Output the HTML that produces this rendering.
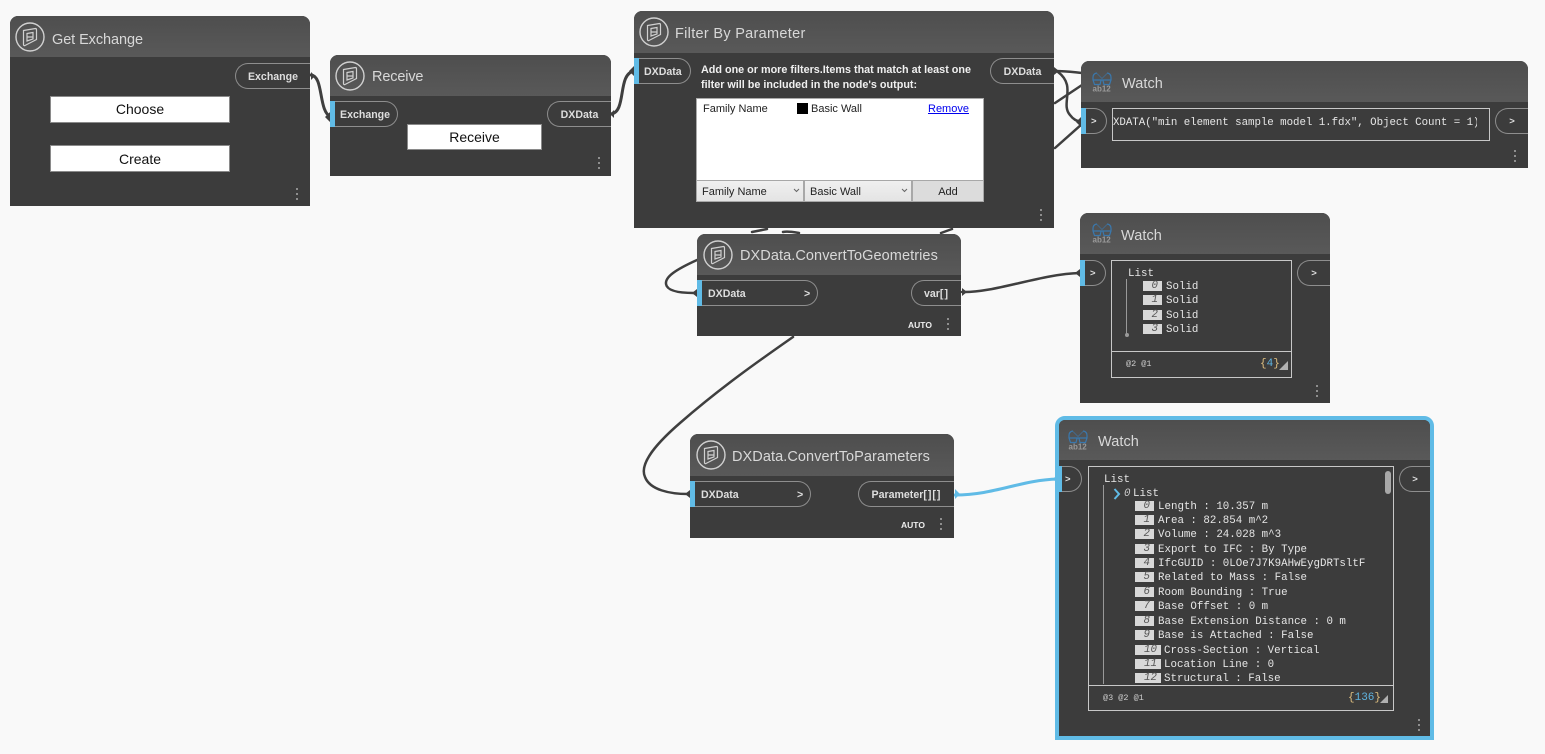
<!DOCTYPE html>
<html><head><meta charset="utf-8"><title>Graph</title>
<style>
html,body{margin:0;padding:0;background:#f9f9f9}
#c{position:relative;width:1545px;height:754px;overflow:hidden;background:#f9f9f9;font-family:"Liberation Sans",sans-serif}
#c div,#c span.a,#c a{position:absolute;box-sizing:border-box}
.n{background:#3c3c3c;border-radius:8px 8px 0 0}
.h{left:0;top:0;right:0;background:linear-gradient(#4e4e4e,#595959);border-radius:8px 8px 0 0}
.t{color:#d8d8d8;font-size:14.5px;line-height:20px;white-space:nowrap;letter-spacing:.08px}
.p{height:26px;border:1px solid #8e8e8e;color:#dedede;font-size:10.6px;font-weight:bold;line-height:26px;white-space:nowrap}
.s{font-size:9.500px}
.i{border-left:0;border-radius:0 13px 13px 0}
.o{border-right:0;border-radius:13px 0 0 13px;text-align:center}
.b{background:#60bbe6;width:5px;height:26px}
.btn{background:#fff;border:1px solid #8a8a8a;color:#111;font-size:14px;text-align:center;white-space:nowrap}
.d{width:2px;height:2px;background:#a8a8a8;border-radius:1px}
.lbl{color:#f0f0f0;font-size:10.8px;white-space:nowrap;line-height:16px}
.blk{color:#222;font-size:11px;white-space:nowrap;line-height:16px}
.m{font-family:"Liberation Mono",monospace;font-size:10.8px;line-height:15px;color:#e6e6e6;white-space:pre}
.ix{background:#d8d8d8;color:#555;font:italic 10.8px/11px "Liberation Mono",monospace;text-align:right;padding-right:4px;height:10px;width:19px}
.bx{border:1px solid #c8c8c8}
.au{color:#eee;font-size:8.500px;font-weight:bold;line-height:12px;white-space:nowrap}
svg{position:absolute;overflow:visible}
.ls{letter-spacing:1px}
</style></head><body><div id="c">

<svg style="left:0;top:0" width="1545" height="754" fill="none" stroke="#3f3f3f" stroke-width="2.5" stroke-linecap="round">
<path d="M311 75C324 76 318 112 331 117" stroke-width="3"/>
<path d="M611 114C627 112 617 74 634 71" stroke-width="3"/>
<path d="M1055 71C1065 71 1072 72 1082 73"/>
<path d="M1058 72C1077 86 1060 104 1070 115C1073 119 1076 121 1082 122"/>
<path d="M1055 103L1082 85"/>
<path d="M1055 148L1082 124"/>
<path d="M752 232L767 229"/>
<path d="M783 232C788 231 793 232 799 233"/>
<path d="M941 233L952 229"/>
<path d="M697 260C675 270 665 277 666 284C667 291 680 293 694 293"/>
<path d="M793 337C760 360 720 388 680 423C650 449 640 466 645 477C650 490 670 494 688 494"/>
<path d="M962 292C995 293 1040 274 1080 273" stroke-width="2.5"/>
<path d="M955 495C995 495 1020 480 1058 479" stroke="#60bbe6" stroke-width="3"/>
<path d="M311 72l4 4l-4 4zM1054 67l5 4l-5 4zM614 110l-4 4l4 4z" fill="#3f3f3f" stroke="none"/>
<path d="M962 288l5 4l-5 4zM1080 269l-5 4l5 4zM697 289l-5 4l5 4zM690 490l-5 4l5 4zM330 112v10l-5-5zM634 66v10l-5-5zM1081 117v10l-5-5z" fill="#3f3f3f" stroke="none"/>
<path d="M955 489l5 5l-5 5zM1058 474v10l-5-5z" fill="#60bbe6" stroke="none"/>
</svg>

<!-- Get Exchange -->
<div class="n" style="left:10px;top:16px;width:300px;height:190px">
<div class="h" style="height:41px"></div>
<svg style="left:5px;top:6px" width="30" height="30" fill="none" stroke="#d0d0d0"><circle cx="15" cy="15" r="14" stroke-width="1.4"/><path d="M8.500 8.500L20.500 6.500Q21.500 6.500 21.500 8V17.500L10 23.500Q8.500 24 8.500 22.500ZM12 11.500L18 10.500V17L12 19ZM12 15H18" stroke-width="1.2"/></svg>
<div class="t" style="left:42px;top:14px;letter-spacing:-.08px">Get Exchange</div>
</div>
<div class="p o" style="left:235px;top:63px;width:75px">Exchange</div>
<div class="btn" style="left:50px;top:96px;width:180px;height:27px;line-height:25px">Choose</div>
<div class="btn" style="left:50px;top:145px;width:180px;height:27px;line-height:26px">Create</div>
<div class="d" style="left:296px;top:188px"></div><div class="d" style="left:296px;top:193px"></div><div class="d" style="left:296px;top:198px"></div>

<!-- Receive -->
<div class="n" style="left:330px;top:55px;width:281px;height:121px">
<div class="h" style="height:41px"></div>
<svg style="left:5px;top:6px" width="30" height="30" fill="none" stroke="#d0d0d0"><circle cx="15" cy="15" r="14" stroke-width="1.4"/><path d="M8.500 8.500L20.500 6.500Q21.500 6.500 21.500 8V17.500L10 23.500Q8.500 24 8.500 22.500ZM12 11.500L18 10.500V17L12 19ZM12 15H18" stroke-width="1.2"/></svg>
<div class="t" style="left:42px;top:12px;letter-spacing:-.15px">Receive</div>
</div>
<div class="p i" style="left:330px;top:101px;width:68px;padding-left:10px">Exchange</div><div class="b" style="left:330px;top:101px"></div>
<div class="p o" style="left:547px;top:101px;width:64px">DXData</div>
<div class="btn" style="left:407px;top:124px;width:135px;height:26px;line-height:24px">Receive</div>
<div class="d" style="left:598px;top:157px"></div><div class="d" style="left:598px;top:162px"></div><div class="d" style="left:598px;top:167px"></div>

<!-- Filter -->
<div class="n" style="left:634px;top:11px;width:420px;height:217px">
<div class="h" style="height:42px"></div>
<svg style="left:5px;top:6px" width="30" height="30" fill="none" stroke="#d0d0d0"><circle cx="15" cy="15" r="14" stroke-width="1.4"/><path d="M8.500 8.500L20.500 6.500Q21.500 6.500 21.500 8V17.500L10 23.500Q8.500 24 8.500 22.500ZM12 11.500L18 10.500V17L12 19ZM12 15H18" stroke-width="1.2"/></svg>
<div class="t" style="left:41px;top:13px;letter-spacing:.3px">Filter By Parameter</div>
</div>
<div class="p i" style="left:634px;top:58px;width:57px;padding-left:10px">DXData</div><div class="b" style="left:634px;top:58px"></div>
<div class="p o" style="left:990px;top:58px;width:64px">DXData</div>
<div class="lbl" style="left:701px;top:62px;font-weight:bold">Add one or more filters.Items that match at least one</div>
<div class="lbl" style="left:701px;top:77px;font-weight:bold">filter will be included in the node's output:</div>
<div style="left:696px;top:98px;width:288px;height:104px;background:#fff;border:1px solid #aaa"></div>
<div class="blk" style="left:703px;top:101px">Family Name</div>
<div style="left:797px;top:103px;width:11px;height:11px;background:#000"></div>
<div class="blk" style="left:811px;top:101px">Basic Wall</div>
<a class="blk" style="position:absolute;left:928px;top:101px;color:#0000ee;text-decoration:underline">Remove</a>
<div style="left:696px;top:180px;width:288px;height:22px;background:#a8a8a8"></div>
<div class="blk" style="left:697px;top:181px;width:106px;height:20px;background:linear-gradient(#f0f0f0,#e4e4e4);padding:3px 0 0 5px;font-weight:normal">Family Name</div>
<div class="blk" style="left:805px;top:181px;width:106px;height:20px;background:linear-gradient(#f0f0f0,#e4e4e4);padding:3px 0 0 5px">Basic Wall</div>
<div class="blk" style="left:913px;top:181px;width:70px;height:20px;background:#dcdcdc;text-align:center;padding-top:3px">Add</div>
<svg style="left:793px;top:188px" width="120" height="6" fill="none" stroke="#666"><path d="M1 1l2.500 2.500L6 1M109 1l2.500 2.500L114 1"/></svg>
<div class="d" style="left:1040px;top:209px"></div><div class="d" style="left:1040px;top:214px"></div><div class="d" style="left:1040px;top:219px"></div>

<!-- Watch 1 -->
<div class="n" style="left:1081px;top:61px;width:447px;height:107px">
<div class="h" style="height:41px"></div>
<svg style="left:11px;top:9px" width="20" height="23" fill="none" stroke="#3a78ad" stroke-width="1.200"><path d="M1 10V7.500Q1 3.500 5 3M19 10V7.500Q19 3.500 15 3M.5 10H19.500M1 10L2.500 14.500H8L9 10.500M19 10L17.500 14.500H12L11 10.500"/><path d="M5 3.500L10 8.500L15 3.500" stroke-opacity=".6" stroke-width="1"/><text x=".5" y="21.500" fill="#9a9a9a" stroke="none" font-size="8" font-family="Liberation Sans" font-weight="bold">ab12</text></svg>
<div class="t" style="left:41px;top:13px">Watch</div>
</div>
<div class="p i s" style="left:1081px;top:108px;width:26px;padding-left:10px">&gt;</div><div class="b" style="left:1081px;top:108px"></div>
<div class="bx" style="left:1112px;top:108px;width:378px;height:33px"></div>
<div class="m" style="left:1113px;top:116px;width:364px;overflow:hidden;letter-spacing:-.05px">XDATA("min element sample model 1.fdx", Object Count = 1)</div>
<div class="p o s" style="left:1495px;top:108px;width:33px">&gt;</div>
<div class="d" style="left:1514px;top:150px"></div><div class="d" style="left:1514px;top:155px"></div><div class="d" style="left:1514px;top:160px"></div>

<!-- Convert To Geometries -->
<div class="n" style="left:697px;top:234px;width:264px;height:102px">
<div class="h" style="height:41px"></div>
<svg style="left:6px;top:6px" width="30" height="30" fill="none" stroke="#d0d0d0"><circle cx="15" cy="15" r="14" stroke-width="1.4"/><path d="M8.500 8.500L20.500 6.500Q21.500 6.500 21.500 8V17.500L10 23.500Q8.500 24 8.500 22.500ZM12 11.500L18 10.500V17L12 19ZM12 15H18" stroke-width="1.2"/></svg>
<div class="t" style="left:43px;top:12px">DXData.ConvertToGeometries</div>
</div>
<div class="p i" style="left:697px;top:280px;width:121px;padding-left:11px">DXData<span class="a" style="left:107px;top:0">&gt;</span></div><div class="b" style="left:697px;top:280px"></div>
<div class="p o" style="left:911px;top:280px;width:50px">var<span class="ls">[]</span></div>
<div class="au" style="left:908px;top:319px">AUTO</div>
<div class="d" style="left:947px;top:318px"></div><div class="d" style="left:947px;top:323px"></div><div class="d" style="left:947px;top:328px"></div>

<!-- Watch 2 -->
<div class="n" style="left:1080px;top:213px;width:250px;height:190px">
<div class="h" style="height:41px"></div>
<svg style="left:12px;top:8px" width="20" height="23" fill="none" stroke="#3a78ad" stroke-width="1.200"><path d="M1 10V7.500Q1 3.500 5 3M19 10V7.500Q19 3.500 15 3M.5 10H19.500M1 10L2.500 14.500H8L9 10.500M19 10L17.500 14.500H12L11 10.500"/><path d="M5 3.500L10 8.500L15 3.500" stroke-opacity=".6" stroke-width="1"/><text x=".5" y="21.500" fill="#9a9a9a" stroke="none" font-size="8" font-family="Liberation Sans" font-weight="bold">ab12</text></svg>
<div class="t" style="left:41px;top:13px">Watch</div>
</div>
<div class="p i s" style="left:1080px;top:260px;width:26px;padding-left:10px">&gt;</div><div class="b" style="left:1080px;top:260px"></div>
<div class="p o s" style="left:1297px;top:260px;width:33px">&gt;</div>
<div class="bx" style="left:1111px;top:260px;width:181px;height:118px"></div>
<div style="left:1112px;top:351px;width:179px;height:1px;background:#c8c8c8"></div>
<div class="m" style="left:1128px;top:267px">List</div>
<div style="left:1126px;top:279px;width:1px;height:55px;background:#999"></div>
<div style="left:1125px;top:333px;width:4px;height:4px;border-radius:2px;background:#999"></div>
<div class="ix" style="left:1143px;top:281px">0</div><div class="m" style="left:1166px;top:280px">Solid</div>
<div class="ix" style="left:1143px;top:295px">1</div><div class="m" style="left:1166px;top:294px">Solid</div>
<div class="ix" style="left:1143px;top:310px">2</div><div class="m" style="left:1166px;top:309px">Solid</div>
<div class="ix" style="left:1143px;top:324px">3</div><div class="m" style="left:1166px;top:323px">Solid</div>
<div class="m" style="left:1126px;top:357px;font-size:8.500px;color:#ccc">@2 @1</div>
<div class="m" style="left:1260px;top:357px;font-size:11px;color:#e0c080">{<span style="color:#5fb4e0">4</span>}</div>
<svg style="left:1279px;top:360px" width="10" height="10"><path d="M0 10L9 1V10Z" fill="#b0b0b0"/></svg>
<div class="d" style="left:1316px;top:385px"></div><div class="d" style="left:1316px;top:390px"></div><div class="d" style="left:1316px;top:395px"></div>

<!-- Convert To Parameters -->
<div class="n" style="left:690px;top:434px;width:264px;height:104px">
<div class="h" style="height:42px"></div>
<svg style="left:6px;top:6px" width="30" height="30" fill="none" stroke="#d0d0d0"><circle cx="15" cy="15" r="14" stroke-width="1.4"/><path d="M8.500 8.500L20.500 6.500Q21.500 6.500 21.500 8V17.500L10 23.500Q8.500 24 8.500 22.500ZM12 11.500L18 10.500V17L12 19ZM12 15H18" stroke-width="1.2"/></svg>
<div class="t" style="left:42px;top:13px">DXData.ConvertToParameters</div>
</div>
<div class="p i" style="left:690px;top:481px;width:121px;padding-left:11px">DXData<span class="a" style="left:107px;top:0">&gt;</span></div><div class="b" style="left:690px;top:481px"></div>
<div class="p o" style="left:858px;top:481px;width:96px">Parameter<span class="ls">[][]</span></div>
<div class="au" style="left:901px;top:519px">AUTO</div>
<div class="d" style="left:940px;top:518px"></div><div class="d" style="left:940px;top:523px"></div><div class="d" style="left:940px;top:528px"></div>

<!-- Watch 3 (selected) -->
<div style="left:1055px;top:416px;width:379px;height:324px;border:4px solid #60bbe6;border-radius:10px 10px 0 0;background:#3c3c3c"></div>
<div class="h" style="left:1059px;top:420px;width:371px;right:auto;height:40px;border-radius:6px 6px 0 0"></div>
<svg style="left:1068px;top:428px" width="20" height="23" fill="none" stroke="#3a78ad" stroke-width="1.200"><path d="M1 10V7.500Q1 3.500 5 3M19 10V7.500Q19 3.500 15 3M.5 10H19.500M1 10L2.500 14.500H8L9 10.500M19 10L17.500 14.500H12L11 10.500"/><path d="M5 3.500L10 8.500L15 3.500" stroke-opacity=".6" stroke-width="1"/><text x=".5" y="21.500" fill="#9a9a9a" stroke="none" font-size="8" font-family="Liberation Sans" font-weight="bold">ab12</text></svg>
<div class="t" style="left:1098px;top:432px">Watch</div>
<div class="p i s" style="left:1059px;top:466px;width:23px;padding-left:6px">&gt;</div><div class="b" style="left:1057px;top:466px"></div>
<div class="p o s" style="left:1399px;top:466px;width:31px">&gt;</div>
<div class="bx" style="left:1088px;top:466px;width:306px;height:245px"></div>
<div style="left:1089px;top:685px;width:304px;height:1px;background:#c8c8c8"></div>
<div style="left:1385px;top:471px;width:6px;height:23px;border-radius:3px;background:#a8a8a8"></div>
<div class="m" style="left:1104px;top:473px">List</div>
<div style="left:1103px;top:485px;width:1px;height:199px;background:#999"></div>
<svg style="left:1113px;top:488px" width="8" height="12" fill="none" stroke="#60bbe6" stroke-width="2"><path d="M1.500 1L6 6L1.500 11"/></svg>
<div class="m" style="left:1124px;top:487px;font-style:italic;color:#ccc">0</div>
<div class="m" style="left:1133px;top:487px">List</div>
<div style="left:1089px;top:500px;width:295px;height:185px;overflow:hidden;background:transparent">
<div class="ix" style="left:46px;top:1px">0</div><div class="m" style="left:69px;top:0">Length : 10.357 m</div>
<div class="ix" style="left:46px;top:15px">1</div><div class="m" style="left:69px;top:14px">Area : 82.854 m^2</div>
<div class="ix" style="left:46px;top:29px">2</div><div class="m" style="left:69px;top:28px">Volume : 24.028 m^3</div>
<div class="ix" style="left:46px;top:44px">3</div><div class="m" style="left:69px;top:43px">Export to IFC : By Type</div>
<div class="ix" style="left:46px;top:58px">4</div><div class="m" style="left:69px;top:57px">IfcGUID : 0LOe7J7K9AHwEygDRTsltF</div>
<div class="ix" style="left:46px;top:72px">5</div><div class="m" style="left:69px;top:71px">Related to Mass : False</div>
<div class="ix" style="left:46px;top:87px">6</div><div class="m" style="left:69px;top:86px">Room Bounding : True</div>
<div class="ix" style="left:46px;top:101px">7</div><div class="m" style="left:69px;top:100px">Base Offset : 0 m</div>
<div class="ix" style="left:46px;top:116px">8</div><div class="m" style="left:69px;top:115px">Base Extension Distance : 0 m</div>
<div class="ix" style="left:46px;top:130px">9</div><div class="m" style="left:69px;top:129px">Base is Attached : False</div>
<div class="ix" style="left:46px;top:145px;width:26px">10</div><div class="m" style="left:75px;top:144px">Cross-Section : Vertical</div>
<div class="ix" style="left:46px;top:159px;width:26px">11</div><div class="m" style="left:75px;top:158px">Location Line : 0</div>
<div class="ix" style="left:46px;top:173px;width:26px">12</div><div class="m" style="left:75px;top:172px">Structural : False</div>
</div>
<div class="m" style="left:1103px;top:691px;font-size:8.500px;color:#ccc">@3 @2 @1</div>
<div class="m" style="left:1348px;top:691px;font-size:11px;color:#e0c080">{<span style="color:#5fb4e0">136</span>}</div>
<svg style="left:1380px;top:694px" width="10" height="10"><path d="M0 9L8 1V9Z" fill="#b0b0b0"/></svg>
<div class="d" style="left:1418px;top:719px"></div><div class="d" style="left:1418px;top:724px"></div><div class="d" style="left:1418px;top:729px"></div>

</div></body></html>
